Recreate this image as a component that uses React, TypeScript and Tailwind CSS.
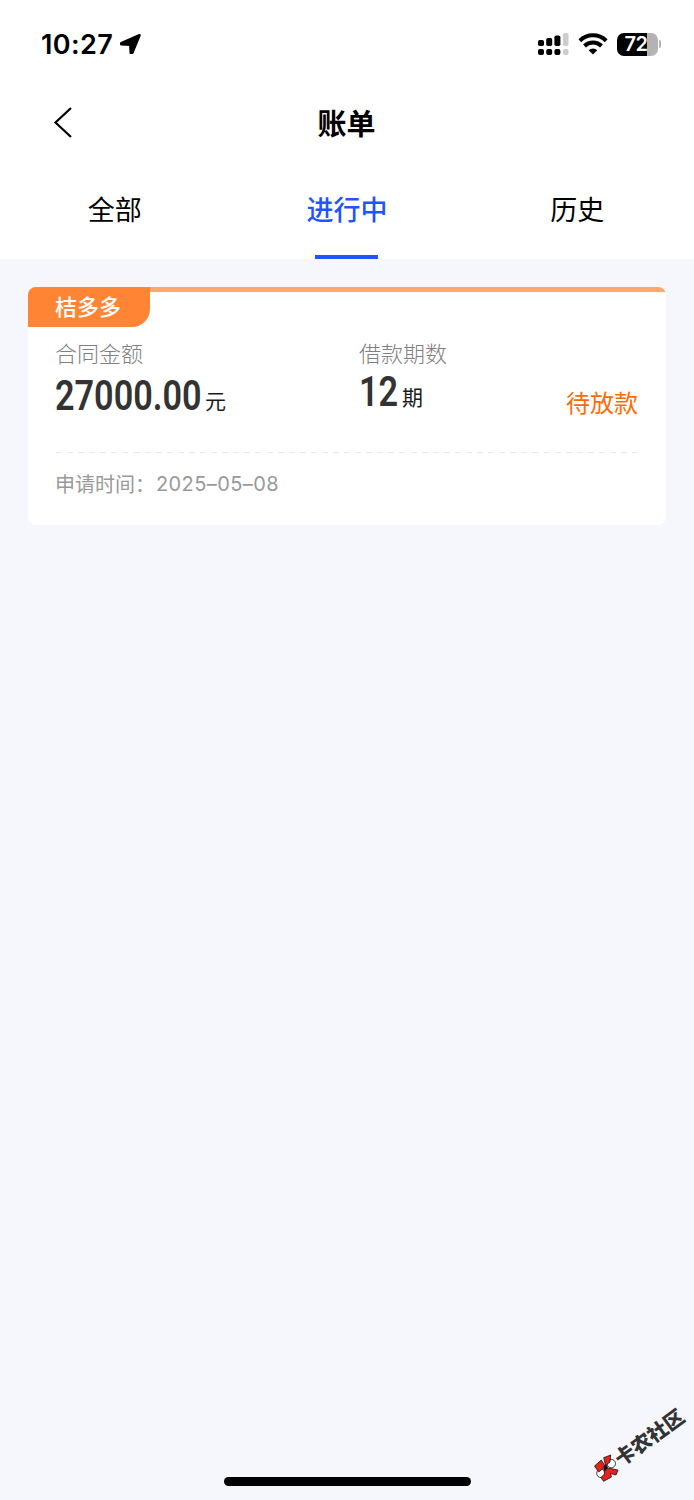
import { useState } from 'react'

type TabKey = 'all' | 'ongoing' | 'history'

interface Bill {
  id: string
  product: string
  amount: string
  periods: number
  status: string
  appliedAt: string
}

const TABS: { key: TabKey; label: string }[] = [
  { key: 'all', label: '全部' },
  { key: 'ongoing', label: '进行中' },
  { key: 'history', label: '历史' },
]

const BILLS: Bill[] = [
  { id: '1', product: '桔多多', amount: '27000.00', periods: 12, status: '待放款', appliedAt: '2025–05–08' },
]

function StatusBar() {
  return (
    <div className="flex h-[88px] items-center justify-between pl-[41px] pr-[33px]">
      <div className="flex items-center gap-[6px]">
        <span className="w-[72px] whitespace-nowrap pt-[1px] font-['Inter','Liberation_Sans',sans-serif] text-[27px] font-semibold leading-[32px] tracking-[0.4px]">
          10:27
        </span>
        <svg width="23" height="22" viewBox="0 0 23 22">
          <path
            d="M2.300 10.200 20.500 2.300 13.300 19.800 11.800 19.800 11.300 11.700 2.300 11.300Z"
            stroke="#000"
            strokeWidth="2.600"
            strokeLinejoin="round"
          />
        </svg>
      </div>
      <div className="flex items-center">
        <svg width="31" height="22" viewBox="0 0 31 22">
          <g>
            <rect x="0" y="7" width="6" height="6" rx="1.800" />
            <rect x="8.200" y="5" width="6" height="8" rx="1.800" />
            <rect x="16.400" y="2.500" width="6" height="10.500" rx="1.800" />
            <rect x="0" y="16" width="6" height="6" rx="2" />
            <rect x="8.200" y="16" width="6" height="6" rx="2" />
            <rect x="16.400" y="16" width="6" height="6" rx="2" />
          </g>
          <g fill="#cccccc">
            <rect x="25" y="0" width="5.500" height="13" rx="1.800" />
            <rect x="25" y="16" width="5.500" height="6" rx="2" />
          </g>
        </svg>
        <svg className="ml-[9px]" width="30" height="22" viewBox="0 0 30 22" fill="none" stroke="#000" strokeWidth="4">
          <path d="M1.800 7.700a19 19 0 0 1 26.400 0" />
          <path d="M6.500 13a12.200 12.200 0 0 1 17 0" />
          <path d="M15 21.500 10.700 17.200a6.200 6.200 0 0 1 8.600 0Z" fill="#000" stroke="none" />
        </svg>
        <div className="ml-[9px] flex h-[23px] w-[41px] items-center justify-center rounded-[7px] bg-[linear-gradient(90deg,#000_72%,#b3b3b3_72%)] pr-[3px]">
          <span className="font-['Inter','Liberation_Sans',sans-serif] text-[20px] font-semibold leading-[24px] tracking-[-0.5px] text-white">
            72
          </span>
        </div>
        <div className="ml-[1px] h-[8px] w-[2px] rounded-r-full bg-[#b3b3b3]" />
      </div>
    </div>
  )
}

function BillCard({ bill }: { bill: Bill }) {
  return (
    <div className="h-[238px] overflow-hidden rounded-[8px] bg-white">
      <div className="flex h-[40px] items-start">
        <div className="flex h-[40px] w-[122px] items-center rounded-br-[18px] bg-[#ff8534] pb-[4px] pl-[27px] text-[22px] font-medium leading-[36px] text-white">
          {bill.product}
        </div>
        <div className="h-[5px] flex-1 bg-[#ffa76f]" />
      </div>

      <div className="mx-[27px] flex h-[125px]">
        <div className="w-[304px] pt-[9px]">
          <p className="mb-[2px] text-[22px] font-light leading-[32px] text-[#808080]">合同金额</p>
          <div className="flex items-baseline">
            <span className="w-[150px] whitespace-nowrap">
              <span className="inline-block origin-left scale-x-[0.815] font-['Roboto',sans-serif] text-[42px] font-semibold leading-[52px] text-[#333]">
                {bill.amount}
              </span>
            </span>
            <span className="-translate-y-px text-[21px] leading-[30px] text-[#1a1a1a]">元</span>
          </div>
        </div>
        <div className="flex-1 pt-[9px]">
          <p className="text-[22px] font-light leading-[32px] text-[#808080]">借款期数</p>
          <div className="-mt-[2px] flex items-baseline">
            <span className="w-[43px] whitespace-nowrap">
              <span className="inline-block origin-left scale-x-[0.815] font-['Roboto',sans-serif] text-[42px] font-semibold leading-[52px] text-[#333]">
                {bill.periods}
              </span>
            </span>
            <span className="-translate-y-px text-[21px] leading-[30px] text-[#1a1a1a]">期</span>
          </div>
        </div>
        <p className="pr-[1px] pt-[57px] text-[24px] leading-[36px] text-[#ff6b00]">{bill.status}</p>
      </div>

      <div className="mx-[28px] h-px bg-[repeating-linear-gradient(90deg,#e8e8e8_0_6px,transparent_6px_11.08px)]" />

      <div className="ml-[27px] flex h-[62px] items-center whitespace-nowrap text-[20px] leading-[30px] text-[#999]">
        <span className="w-[101px]">申请时间：</span>
        <span className="font-['Inter','Liberation_Sans',sans-serif] tracking-[0.4px]">
          {bill.appliedAt}
        </span>
      </div>
    </div>
  )
}

// Community logo stamped across the bottom right corner
function CommunityMark() {
  return (
    <div className="absolute bottom-[15px] right-[6px] h-[78px] w-[96px]">
      <svg width="28" height="28" viewBox="0 0 28 28" className="absolute bottom-[3px] left-[1px]">
        <g stroke="#111" strokeWidth="0.800">
          <circle cx="18.300" cy="9.600" r="4.200" fill="#fff" />
          <circle cx="7.900" cy="19.300" r="4.200" fill="#fff" />
          <path d="M1.500 12 8.300 6l4 6.500L5.700 18Z" fill="#e3231c" />
          <path d="m10.700 3.700 7-2.700-.7 7-4.500 3.500Z" fill="#e3231c" />
          <path d="m14.500 14 10.500 2-2 5-5.500-1.500 1 3.500-8 4.300L8 23.500l3.500-3.500-.5-5.500Z" fill="#e3231c" />
        </g>
        <path d="m10.500 12 3-1.500 1.500 3-2.500 3-1.500.500Z" fill="#111" />
      </svg>
      <span className="absolute left-[17px] top-[17px] -rotate-[36deg] whitespace-nowrap text-[20px] font-black leading-[26px] text-[#333]">
        卡农社区
      </span>
    </div>
  )
}

export default function App() {
  const [activeTab, setActiveTab] = useState<TabKey>('ongoing')

  return (
    <div className="relative flex h-[1500px] w-[694px] flex-col overflow-hidden bg-[#f5f7fd] font-['Noto_Sans_CJK_SC',sans-serif] text-black">
      <header className="bg-white">
        <StatusBar />

        <div className="grid h-[70px] grid-cols-[100px_1fr_100px] items-center">
          <button className="ml-[53px] w-fit" aria-label="返回">
            <svg width="20" height="32" viewBox="0 0 20 32" fill="none" stroke="#000" strokeWidth="2.200">
              <path d="M18 1 2.500 15.500 18 30" />
            </svg>
          </button>
          <h1 className="pb-[3px] pr-[1px] text-center text-[29px] font-semibold leading-[40px]">账单</h1>
        </div>

        {/* Tabs */}
        <div className="grid h-[101px] grid-cols-3">
          {TABS.map((t) => (
            <button
              key={t.key}
              onClick={() => setActiveTab(t.key)}
              className={`flex flex-col items-center justify-between pt-[31px] text-[27px] leading-[40px] ${
                activeTab === t.key ? 'font-medium text-[#1f55ff]' : 'pr-[2px]'
              }`}
            >
              {t.label}
              {activeTab === t.key && <span className="h-[4px] w-[63px] bg-[#1f55ff]" />}
            </button>
          ))}
        </div>
      </header>

      <main className="flex flex-1 flex-col gap-5 px-[28px] pt-[28px]">
        {BILLS.map((bill) => (
          <BillCard key={bill.id} bill={bill} />
        ))}
      </main>

      <div className="mb-[14px] h-[9px] w-[247px] self-center rounded-full bg-black" />
      <CommunityMark />
    </div>
  )
}
